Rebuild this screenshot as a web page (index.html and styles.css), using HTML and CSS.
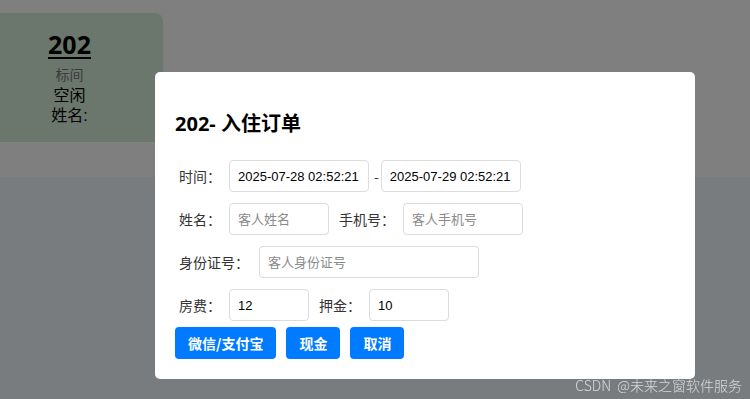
FILE: index.html
```html
<!DOCTYPE html>
<html lang="zh">
<head>
<meta charset="utf-8">
<title>入住订单</title>
<link rel="stylesheet" href="styles.css">
</head>
<body>
<div class="page">
  <section class="rooms">
    <div class="room-card">
      <a class="room-no" href="#">202</a>
      <div class="room-type">标间</div>
      <div class="room-status">空闲</div>
      <div class="room-guest">姓名:</div>
    </div>
  </section>
  <section class="lower"></section>
</div>

<div class="overlay">
  <div class="modal">
    <h2 class="modal-title">202- 入住订单</h2>
    <div class="row">
      <label class="lbl">时间：</label>
      <input class="inp w140" type="text" value="2025-07-28 02:52:21">
      <span class="dash">-</span>
      <input class="inp w140" type="text" value="2025-07-29 02:52:21">
    </div>
    <div class="row">
      <label class="lbl">姓名：</label>
      <input class="inp w100" type="text" placeholder="客人姓名">
      <label class="lbl lbl-next">手机号：</label>
      <input class="inp w120" type="text" placeholder="客人手机号">
    </div>
    <div class="row">
      <label class="lbl lbl-wide">身份证号：</label>
      <input class="inp w220" type="text" placeholder="客人身份证号">
    </div>
    <div class="row row-last">
      <label class="lbl">房费：</label>
      <input class="inp w80" type="text" value="12">
      <label class="lbl lbl-next">押金：</label>
      <input class="inp w80" type="text" value="10">
    </div>
    <div class="actions">
      <button class="btn">微信/支付宝</button>
      <button class="btn">现金</button>
      <button class="btn">取消</button>
    </div>
  </div>
</div>

<div class="watermark">CSDN @未来之窗软件服务</div>
</body>
</html>
```

FILE: styles.css
```css
* { box-sizing: border-box; }

html, body {
  margin: 0;
  padding: 0;
  height: 100%;
  overflow: hidden;
}

body {
  font-family: "Noto Sans", "Noto Sans CJK SC", sans-serif;
  background: #f3f9ff;
  color: #000;
}

.page {
  display: flex;
  flex-direction: column;
  height: 100%;
}

.rooms {
  background: #ffffff;
  padding: 13px 0 35px;
  margin-left: -24px;
  display: flex;
}

.room-card {
  width: 187px;
  height: 129px;
  background: #d6eedb;
  border-radius: 8px;
  text-align: center;
  padding-top: 17px;
}

.room-no {
  display: block;
  font-size: 25px;
  font-weight: 700;
  line-height: 29px;
  color: #000;
  text-decoration: underline;
  text-underline-offset: 3px;
  text-decoration-thickness: 2px;
}

.room-type {
  margin-top: 6px;
  font-size: 14px;
  line-height: 20px;
  color: #777;
  font-family: "Liberation Sans", "Noto Sans CJK SC", sans-serif;
}

.room-status,
.room-guest {
  font-size: 16px;
  line-height: 20px;
  color: #000;
  font-family: "Liberation Sans", "Noto Sans CJK SC", sans-serif;
}

.room-status { margin-top: 1px; }

.lower { flex: 1; }

.overlay {
  position: fixed;
  inset: 0;
  background: rgba(0, 0, 0, 0.5);
  padding: 72px 0 0 155px;
}

.modal {
  width: 540px;
  height: 307px;
  background: #fff;
  border-radius: 5px;
  padding: 20px 20px;
  font-family: "Noto Sans CJK SC", sans-serif;
}

.modal-title {
  margin: 20px 0 24px 0;
  font-size: 20px;
  line-height: 24px;
  font-weight: 700;
  color: #000;
  font-family: "Noto Sans", "Noto Sans CJK SC", sans-serif;
}

.row {
  display: flex;
  align-items: center;
  height: 32px;
  margin-bottom: 11px;
  padding-left: 4px;
}

.row-last { margin-bottom: 6px; }

.lbl {
  font-size: 14px;
  color: #333;
  margin-right: 8px;
  white-space: nowrap;
}

.lbl-next { margin-left: 10px; }
.lbl-wide { margin-right: 10px; }

.inp {
  height: 32px;
  border: 1px solid #dcdcdc;
  border-radius: 4px;
  padding: 0 8px;
  font-family: "Liberation Sans", "Noto Sans CJK SC", sans-serif;
  font-size: 13px;
  color: #000;
  background: #fff;
  outline: none;
}

.inp::placeholder {
  color: #8a8a8a;
  font-family: "Noto Sans CJK SC", sans-serif;
  font-size: 13px;
}

.w80 { width: 80px; }
.w100 { width: 100px; }
.w120 { width: 120px; }
.w140 { width: 140px; }
.w220 { width: 220px; }

.dash {
  font-size: 14px;
  color: #333;
  margin: 0 2px 0 5px;
}

.actions {
  display: flex;
  gap: 10px;
}

.btn {
  height: 32px;
  padding: 0 13px;
  border: none;
  border-radius: 4px;
  background: #007bff;
  color: #fff;
  font-family: "Noto Sans CJK SC", sans-serif;
  font-size: 14px;
  font-weight: 700;
}

.watermark {
  position: fixed;
  right: 8px;
  bottom: 5px;
  font-family: "Noto Sans CJK SC", sans-serif;
  font-size: 14px;
  line-height: 18px;
  color: rgba(225, 225, 225, 0.9);
  font-weight: 300;
  word-spacing: 3px;
}
```
